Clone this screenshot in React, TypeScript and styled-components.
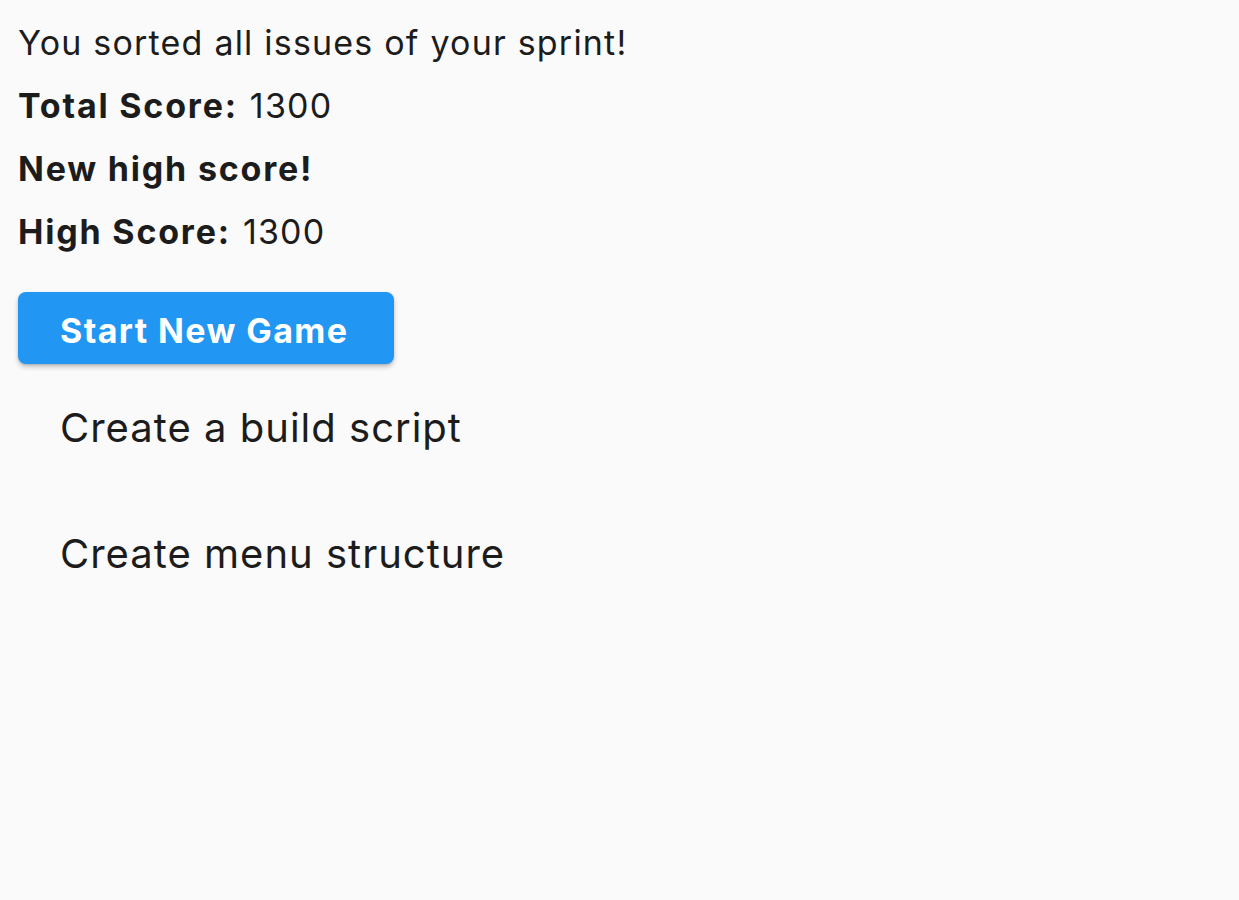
import React from "react";
import styled, { createGlobalStyle } from "styled-components";

const Global = createGlobalStyle`
  html, body { margin: 0; padding: 0; background: #fafafa; }
  body { font-family: Inter, "Noto Sans", sans-serif; color: #1c1c1c; }
`;

const Page = styled.div`
  padding: 11px 18px;
  display: flex;
  flex-direction: column;
  align-items: flex-start;
`;

const Line = styled.p`
  margin: 0;
  font-size: 34px;
  height: 63px;
  display: flex;
  align-items: center;
  letter-spacing: 1.2px;
`;

const Bold = styled.strong`
  font-weight: 700;
  letter-spacing: 1.8px;
  margin-right: 12px;
`;

const Button = styled.button`
  margin-top: 29px;
  width: 376px;
  height: 72px;
  border: none;
  border-radius: 8px;
  background: #2196f3;
  color: #fff;
  font-family: Inter, "Noto Sans", sans-serif;
  font-size: 34px;
  font-weight: 700;
  letter-spacing: 1.4px;
  text-align: left;
  padding: 5px 0 0 42px;
  box-shadow: 0 3px 5px rgba(0, 0, 0, 0.22), 0 1px 2px rgba(0, 0, 0, 0.12);
`;

const List = styled.ul`
  list-style: none;
  margin: 1px 0 0;
  padding: 0 0 0 42px;
`;

const Item = styled.li`
  font-size: 40px;
  letter-spacing: 1px;
  height: 126px;
  line-height: 126px;
`;

export default function App() {
  return (
    <>
      <Global />
      <Page>
        <Line>You sorted all issues of your sprint!</Line>
        <Line>
          <Bold>Total Score:</Bold>1300
        </Line>
        <Line>
          <Bold>New high score!</Bold>
        </Line>
        <Line>
          <Bold>High Score:</Bold>1300
        </Line>
        <Button>Start New Game</Button>
        <List>
          <Item>Create a build script</Item>
          <Item>Create menu structure</Item>
        </List>
      </Page>
    </>
  );
}
